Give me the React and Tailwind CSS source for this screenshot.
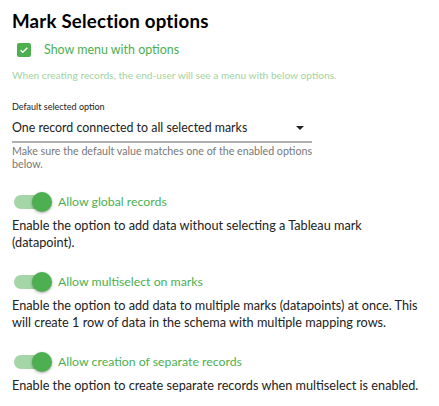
import React from "react";

function Toggle({ label }) {
  return (
    <div className="flex items-center h-[20px]">
      <div className="relative w-[38px] h-[20px] ml-[14px] shrink-0">
        <div className="absolute left-0 top-[3px] w-[34px] h-[14px] rounded-full bg-[#a5d6a7]" />
        <div className="absolute left-[18px] top-0 w-[20px] h-[20px] rounded-full bg-[#4caf50] shadow-[0_1px_3px_rgba(0,0,0,0.35)]" />
      </div>
      <span className="ml-[6px] text-[12.3px] leading-[20px] text-[#4caf50]">{label}</span>
    </div>
  );
}

export default function App() {
  return (
    <div className="w-[439px] h-[406px] overflow-hidden bg-white px-[12px] text-[#222]" style={{ fontFamily: "Lato, 'Open Sans', sans-serif" }}>
      <h1 className="pt-[8px] text-[18.7px] font-bold leading-[26px] text-black tracking-[0.2px]">Mark Selection options</h1>
      <div className="flex items-center mt-[9px] h-[14px]">
        <div className="ml-[5px] w-[14px] h-[14px] rounded-[2px] bg-[#4caf50] flex items-center justify-center">
          <svg width="10" height="10" viewBox="0 0 24 24"><path d="M4 12.5l5 5L20 6.5" stroke="white" strokeWidth="3.2" fill="none" /></svg>
        </div>
        <span className="ml-[13px] text-[12.45px] leading-[14px] text-[#4caf50]">Show menu with options</span>
      </div>
      <p className="mt-[12px] text-[10.2px] text-[#9fd4a1] leading-[12px]">When creating records, the end-user will see a menu with below options.</p>
      <p className="mt-[20px] text-[9px] leading-[12px] text-[#222]">Default selected option</p>
      <div className="w-[300px] mt-[4px] border-b-2 border-[#b0b0b0] flex items-center justify-between h-[26px] pb-[2px]">
        <span className="text-[12.4px] text-[#222]">One record connected to all selected marks</span>
        <svg width="8" height="4" viewBox="0 0 10 5" className="mr-[8px]"><path d="M0 0h10L5 5z" fill="#222" /></svg>
      </div>
      <p className="w-[304px] mt-[1px] text-[10.7px] leading-[13px] text-[#777]">Make sure the default value matches one of the enabled options below.</p>

      <div className="mt-[22px] -ml-[12px]"><Toggle label="Allow global records" /></div>
      <p className="mt-[5px] text-[12.7px] leading-[17px]">Enable the option to add data without selecting a Tableau mark (datapoint).</p>

      <div className="mt-[21px] -ml-[12px]"><Toggle label="Allow multiselect on marks" /></div>
      <p className="mt-[5px] text-[12.7px] leading-[17px]">Enable the option to add data to multiple marks (datapoints) at once. This will create 1 row of data in the schema with multiple mapping rows.</p>

      <div className="mt-[21px] -ml-[12px]"><Toggle label="Allow creation of separate records" /></div>
      <p className="mt-[5px] text-[12.7px] leading-[17px]">Enable the option to create separate records when multiselect is enabled.</p>
    </div>
  );
}
